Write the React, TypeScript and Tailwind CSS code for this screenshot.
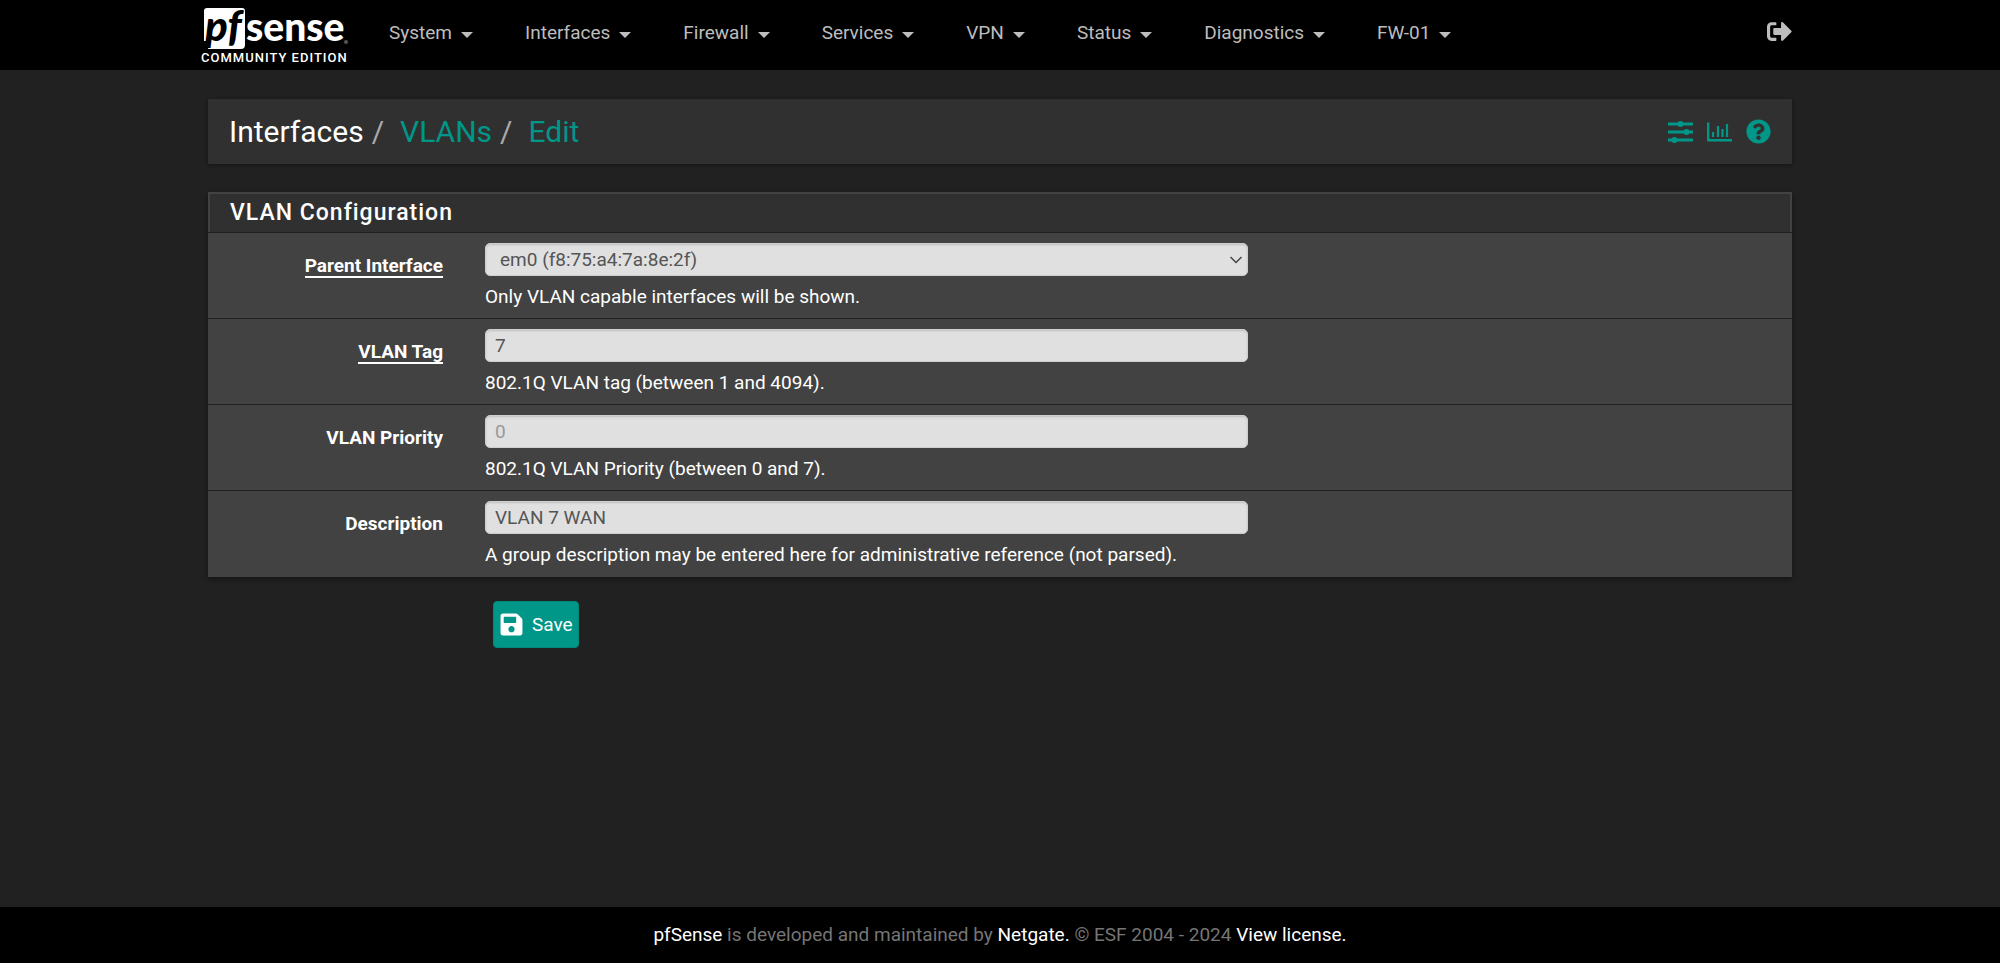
import { useState } from 'react'
import type { ReactNode } from 'react'
import { FaSignOutAlt, FaQuestionCircle, FaSave } from 'react-icons/fa'

const menus = ['System', 'Interfaces', 'Firewall', 'Services', 'VPN', 'Status', 'Diagnostics', 'FW-01']

const controlClass =
  "h-[33px] w-full rounded-[5px] border border-[#cfcfcf] bg-[#e0e0e0] text-[19px] leading-6 text-[#555] shadow-[inset_0_1px_2px_rgba(0,0,0,0.15)] outline-none placeholder:text-[#999]"

function Logo() {
  return (
    <a href="#" aria-label="pfSense Community Edition" className="block w-[152px] shrink-0">
      <svg viewBox="0 0 152 68" className="block h-[68px] w-[152px]">
        <path d="M7 8H42Q45 8 45 11V45Q45 49 41 49H8L10 41H4V11Q4 8 7 8Z" fill="#fff" />
        <text x="5" y="41" fontFamily="Lato, sans-serif" fontWeight="900" fontStyle="italic" fontSize="42" fill="#000">
          pf
        </text>
        <text x="46" y="41" fontFamily="Lato, sans-serif" fontWeight="900" fontSize="39" fill="#fff">
          sense
        </text>
        <circle cx="146" cy="42" r="2" fill="#555" />
        <text x="1" y="62" fontFamily="Roboto, sans-serif" fontWeight="500" fontSize="13" letterSpacing="1" fill="#fff">
          COMMUNITY EDITION
        </text>
      </svg>
    </a>
  )
}

function Header() {
  return (
    <header className="h-[70px] bg-black">
      <div className="mx-auto flex w-4/5 max-w-[1600px] items-start justify-between">
        <div className="flex items-start">
          <Logo />
          <nav className="ml-[37px] flex gap-[52px] pt-[21px]">
            {menus.map((m) => (
              <button key={m} type="button" className="flex items-center gap-[9px] text-[19px] leading-6 text-[#bdbdbd] hover:text-white">
                {m}
                <span className="mt-1 border-x-[6px] border-t-[6px] border-x-transparent border-t-current" />
              </button>
            ))}
          </nav>
        </div>
        <button type="button" aria-label="Logout" className="pt-[19px] pr-2 text-[#bdbdbd] hover:text-white">
          <FaSignOutAlt size={25} />
        </button>
      </div>
    </header>
  )
}

function Breadcrumb() {
  return (
    <div className="flex h-[65px] items-center justify-between bg-[#303030] px-[21px] shadow-[0_1px_4px_rgba(0,0,0,0.4)]">
      <ol className="flex text-[30px] leading-9 text-[#aaa]">
        <li className="text-white">Interfaces</li>
        <li className="px-2">/</li>
        <li className="pl-2">
          <a href="#" className="text-[#009688]">VLANs</a>
        </li>
        <li className="px-2">/</li>
        <li className="pl-2">
          <a href="#" className="text-[#009688]">Edit</a>
        </li>
      </ol>
      <div className="flex items-center gap-[14px] text-[#009688]">
        <a href="#" aria-label="Settings">
          <svg viewBox="0 0 25 24" className="block h-6 w-[25px]" fill="currentColor">
            <path d="M0 2.500h25v3H0zM0 10.500h25v3H0zM0 18.500h25v3H0z" />
            <circle cx="12.500" cy="4" r="3" />
            <circle cx="18.500" cy="12" r="3" />
            <circle cx="6.500" cy="20" r="3" />
          </svg>
        </a>
        <a href="#" aria-label="Status">
          <svg viewBox="0 0 25 24" className="block h-6 w-[25px]" fill="none" stroke="currentColor" strokeWidth="2.400" strokeLinejoin="round">
            <path d="M1.200 2.500V20.300H25" />
            <path d="M6 12v5M11 6v11M15.500 9v8M20 4v13" strokeWidth="2.200" />
          </svg>
        </a>
        <a href="#" aria-label="Help">
          <FaQuestionCircle size={25} />
        </a>
      </div>
    </div>
  )
}

type FieldProps = {
  id: string
  label: string
  help: string
  required?: boolean
  children: ReactNode
}

function Field({ id, label, help, required, children }: FieldProps) {
  return (
    <div className="flex border-t border-[#212121] pt-[10px] pb-2">
      <label htmlFor={id} className="w-[235px] shrink-0 pt-[13px] text-right text-[19px] leading-5 font-bold">
        <span className={required ? 'inline-block border-b-2 border-white' : ''}>{label}</span>
      </label>
      <div className="ml-[42px] flex-1">
        <div className="w-[58.4%]">{children}</div>
        <p className="mt-2 text-[19px] leading-[26px]">{help}</p>
      </div>
    </div>
  )
}

export default function App() {
  const [tag, setTag] = useState('7')
  const [priority, setPriority] = useState('')
  const [descr, setDescr] = useState('VLAN 7 WAN')

  return (
    <div className="flex min-h-screen flex-col bg-[#212121] font-[Roboto,sans-serif] text-white">
      <Header />
      <main className="mx-auto mt-[29px] w-[79.2%] flex-1">
        <Breadcrumb />
        <form onSubmit={(e) => e.preventDefault()}>
          <section className="mt-7 bg-[#424242] pb-px shadow-[0_2px_6px_rgba(0,0,0,0.4)]">
            <h2 className="border-x-2 border-t-2 border-[#424242] bg-[#303030] px-5 py-[6px] text-[23px] leading-[26px] font-medium tracking-[1px]">
              VLAN Configuration
            </h2>
            <Field id="if" label="Parent Interface" help="Only VLAN capable interfaces will be shown." required>
              <div className="grid items-center">
                <select id="if" className={`${controlClass} col-start-1 row-start-1 appearance-none px-[14px]`}>
                  <option>em0 (f8:75:a4:7a:8e:2f)</option>
                </select>
                <svg viewBox="0 0 12 8" className="pointer-events-none col-start-1 row-start-1 mr-[6px] h-2 w-3 justify-self-end" fill="none" stroke="#444" strokeWidth="1.500">
                  <path d="M0.500 1L6 6.500L11.500 1" />
                </svg>
              </div>
            </Field>
            <Field id="tag" label="VLAN Tag" help="802.1Q VLAN tag (between 1 and 4094)." required>
              <input id="tag" value={tag} onChange={(e) => setTag(e.target.value)} className={`${controlClass} px-[9px]`} />
            </Field>
            <Field id="pcp" label="VLAN Priority" help="802.1Q VLAN Priority (between 0 and 7).">
              <input id="pcp" placeholder="0" value={priority} onChange={(e) => setPriority(e.target.value)} className={`${controlClass} px-[9px]`} />
            </Field>
            <Field
              id="descr"
              label="Description"
              help="A group description may be entered here for administrative reference (not parsed)."
            >
              <input id="descr" value={descr} onChange={(e) => setDescr(e.target.value)} className={`${controlClass} px-[9px]`} />
            </Field>
          </section>
          <button
            type="submit"
            className="mt-6 ml-[285px] flex h-[47px] items-center gap-2 rounded-[4px] border border-[#00897b] bg-[#009688] px-[5px] text-[19px] leading-6"
          >
            <FaSave size={25} />
            Save
          </button>
        </form>
      </main>
      <footer className="bg-black py-4 text-center text-[19px] leading-6 text-[#757575]">
        <a href="#" className="text-white">pfSense</a> is developed and maintained by{' '}
        <a href="#" className="text-white">Netgate.</a> © ESF 2004 - 2024{' '}
        <a href="#" className="text-white">View license.</a>
      </footer>
    </div>
  )
}
